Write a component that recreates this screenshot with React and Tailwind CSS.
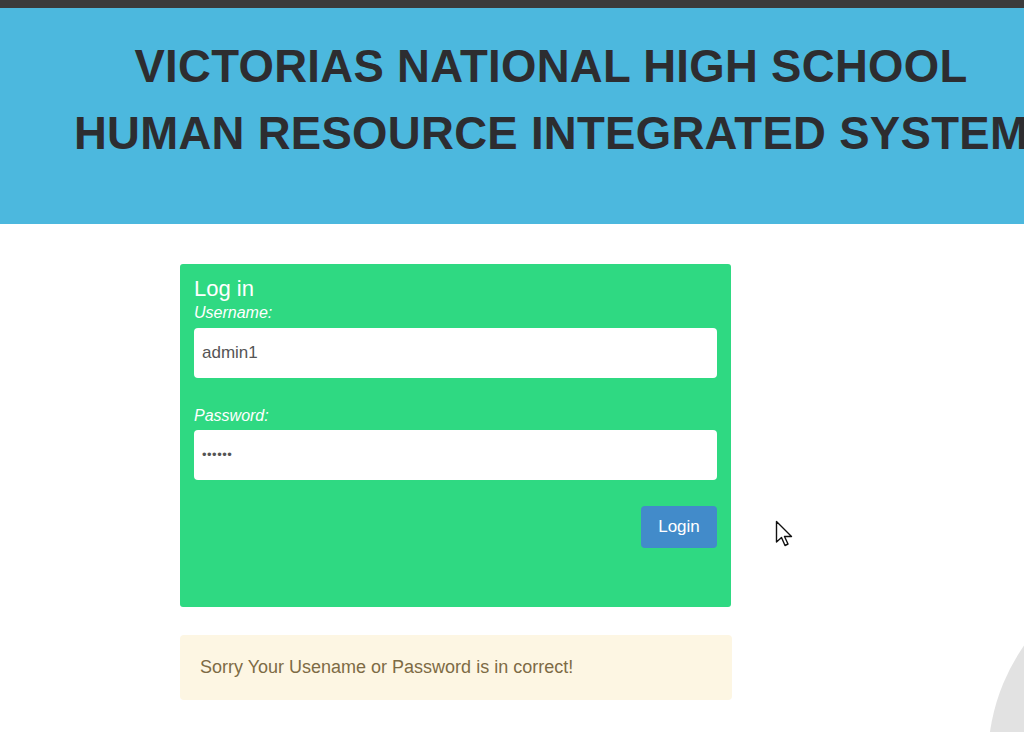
import React from "react";

export default function App() {
  return (
    <div className="relative w-[1024px] h-[732px] overflow-hidden bg-white" style={{ fontFamily: '"Liberation Sans", Arial, sans-serif' }}>
      <div className="h-[8px] bg-[#3b3b3b]" />
      <div className="h-[216px] bg-[#4cb8de] overflow-hidden">
        <div className="w-[1102px] pt-[25px] flex flex-col items-center text-[#2d2d30] font-bold text-[45.5px] leading-[67px] tracking-[0.3px]">
          <div className="whitespace-nowrap">VICTORIAS NATIONAL HIGH SCHOOL</div>
          <div className="whitespace-nowrap">HUMAN RESOURCE INTEGRATED SYSTEM</div>
        </div>
      </div>
      <div className="pl-[180px] pt-[40px]">
        <div className="w-[551px] bg-[#2fd982] rounded-[3px] h-[343px] px-[14px] pt-[12px]">
          <div className="text-white text-[22px] leading-[26px]">Log in</div>
          <div className="text-white italic text-[16px] leading-[20px] mt-[1px]">Username:</div>
          <div className="mt-[5px] h-[50px] bg-white rounded-[4px] flex items-center px-[8px] text-[17px] text-[#555]">admin1</div>
          <div className="text-white italic text-[16px] leading-[20px] mt-[28px]">Password:</div>
          <div className="mt-[4px] h-[50px] bg-white rounded-[4px] flex items-center px-[8px] text-[13px] text-[#555] tracking-[0.5px]">••••••</div>
          <div className="flex justify-end mt-[26px]">
            <div className="w-[76px] h-[42px] bg-[#428bca] rounded-[4px] text-white text-[17px] flex items-center justify-center">Login</div>
          </div>
        </div>
        <div className="w-[552px] mt-[28px] h-[65px] bg-[#fdf6e3] rounded-[4px] flex items-center px-[20px] text-[18px] text-[#7d6b45]">
          Sorry Your Usename or Password is in correct!
        </div>
      </div>
      <div className="absolute left-[988px] top-[560px] w-[400px] h-[400px] rounded-full bg-[#e2e2e2]" />
      <svg className="absolute left-[775px] top-[520px]" width="20" height="28" viewBox="0 0 20 28">
        <path d="M1.5 1.5 L1.5 22 L6.5 17.5 L10 25.5 L13 24 L9.5 16.5 L16.5 16.5 Z" fill="white" stroke="#111" strokeWidth="1.4" strokeLinejoin="round" />
      </svg>
    </div>
  );
}
